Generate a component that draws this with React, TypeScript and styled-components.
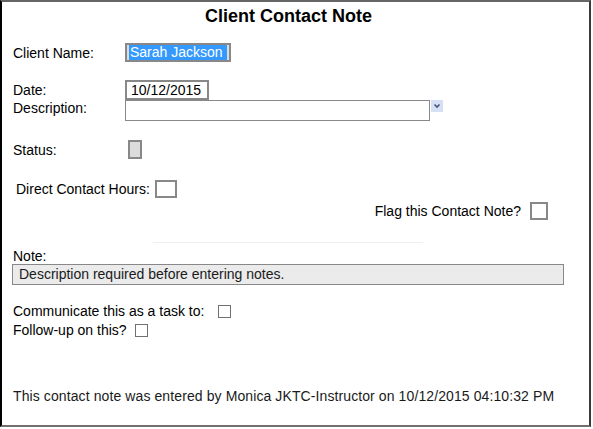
import styled, { createGlobalStyle } from 'styled-components';

const GlobalStyle = createGlobalStyle`
  html, body {
    margin: 0;
    padding: 0;
    background: #fff;
  }
  body {
    font-family: "Liberation Sans", Arial, sans-serif;
    font-size: 14px;
    color: #000;
  }
`;

const Frame = styled.div`
  box-sizing: border-box;
  width: 591px;
  height: 427px;
  border-left: 2px solid #000;
  border-top: 2px solid #666;
  border-right: 2px solid #3a3a3a;
  border-bottom: 2px solid #707070;
  padding: 0 11px;
  display: flex;
  flex-direction: column;
`;

const Title = styled.h1`
  margin: 4px 0 0;
  width: 551px;
  font-size: 18px;
  line-height: 21px;
  font-weight: bold;
  text-align: center;
`;

const Row = styled.div<{ $top: number; $height: number; $align?: string; $justify?: string; $indent?: number; $gap?: number }>`
  display: flex;
  align-items: ${(p) => p.$align || 'center'};
  justify-content: ${(p) => p.$justify || 'flex-start'};
  margin-top: ${(p) => p.$top}px;
  height: ${(p) => p.$height}px;
  padding-left: ${(p) => p.$indent || 0}px;
  gap: ${(p) => p.$gap || 0}px;
`;

const Label = styled.span<{ $width?: number }>`
  line-height: 16px;
  white-space: nowrap;
  ${(p) => (p.$width ? `width: ${p.$width}px; flex: none;` : '')}
`;

const NameBox = styled.div`
  box-sizing: border-box;
  width: 106px;
  height: 19px;
  border: 2px solid #888;
  background: #dcdcdc;
  padding: 0 2px;
  display: flex;
`;

const Selected = styled.span`
  flex: 1;
  background: #3399ff;
  color: #fff;
  line-height: 15px;
  padding-left: 1px;
  white-space: nowrap;
`;

const DateBox = styled.div`
  box-sizing: border-box;
  width: 84px;
  height: 20px;
  border: 2px solid #888;
  background: #fff;
  padding-left: 4px;
  line-height: 16px;
`;

const SelectBox = styled.div`
  box-sizing: border-box;
  width: 305px;
  height: 21px;
  border: 1px solid #888;
  background: #fff;
`;

const DropButton = styled.svg`
  display: block;
  flex: none;
`;

const StatusBox = styled.div`
  box-sizing: border-box;
  margin-left: 3px;
  width: 14px;
  height: 19px;
  border: 2px solid #888;
  background: #dcdcdc;
`;

const Field = styled.div<{ $w: number; $h: number; $right?: number }>`
  box-sizing: border-box;
  flex: none;
  width: ${(p) => p.$w}px;
  height: ${(p) => p.$h}px;
  margin-right: ${(p) => p.$right || 0}px;
  border: 2px solid #888;
  background: #fff;
`;

const Rule = styled.div`
  margin: 22px 0 0 140px;
  width: 270px;
  height: 1px;
  background: #eeeeee;
`;

const NoteLabel = styled.div`
  margin-top: 6px;
  line-height: 15px;
`;

const NoteBox = styled.div`
  box-sizing: border-box;
  margin-left: -1px;
  width: 552px;
  height: 21px;
  border: 1px solid #888;
  background: #ebebeb;
  padding-left: 6px;
  line-height: 19px;
  color: #1a1a1a;
`;

const Check = styled.input.attrs({ type: 'checkbox' })`
  appearance: none;
  box-sizing: border-box;
  margin: 0;
  flex: none;
  width: 13px;
  height: 13px;
  border: 1px solid #707070;
  background: #fff;
`;

const Footer = styled.div`
  margin-top: 50px;
  line-height: 16px;
  letter-spacing: 0.1px;
  color: #1a1a1a;
`;

export default function App() {
  return (
    <>
      <GlobalStyle />
      <Frame>
        <Title>Client Contact Note</Title>

        <Row $top={16} $height={19}>
          <Label $width={112}>Client Name:</Label>
          <NameBox>
            <Selected>Sarah Jackson</Selected>
          </NameBox>
        </Row>

        <Row $top={18} $height={20}>
          <Label $width={112}>Date:</Label>
          <DateBox>10/12/2015</DateBox>
        </Row>

        <Row $top={0} $height={21} $align="flex-start">
          <Label $width={112}>Description:</Label>
          <SelectBox />
          <DropButton width="13" height="12" viewBox="0 0 13 12">
            <rect x="1" y="0" width="12" height="12" fill="#d5e0f4" />
            <path d="M4.5 4.5 L7 7 L9.5 4.5" fill="none" stroke="#4a5680" strokeWidth="1.6" />
          </DropButton>
        </Row>

        <Row $top={19} $height={19}>
          <Label $width={112}>Status:</Label>
          <StatusBox />
        </Row>

        <Row $top={21} $height={18} $indent={3} $gap={5}>
          <Label>Direct Contact Hours:</Label>
          <Field $w={22} $h={18} />
        </Row>

        <Row $top={4} $height={18} $justify="flex-end" $gap={9}>
          <Label>Flag this Contact Note?</Label>
          <Field $w={18} $h={18} $right={30} />
        </Row>

        <Rule />

        <NoteLabel>Note:</NoteLabel>
        <NoteBox>Description required before entering notes.</NoteBox>

        <Row $top={18} $height={16} $gap={14}>
          <Label>Communicate this as a task to:</Label>
          <Check />
        </Row>

        <Row $top={3} $height={16} $gap={8}>
          <Label>Follow-up on this?</Label>
          <Check />
        </Row>

        <Footer>This contact note was entered by Monica JKTC-Instructor on 10/12/2015 04:10:32 PM</Footer>
      </Frame>
    </>
  );
}
